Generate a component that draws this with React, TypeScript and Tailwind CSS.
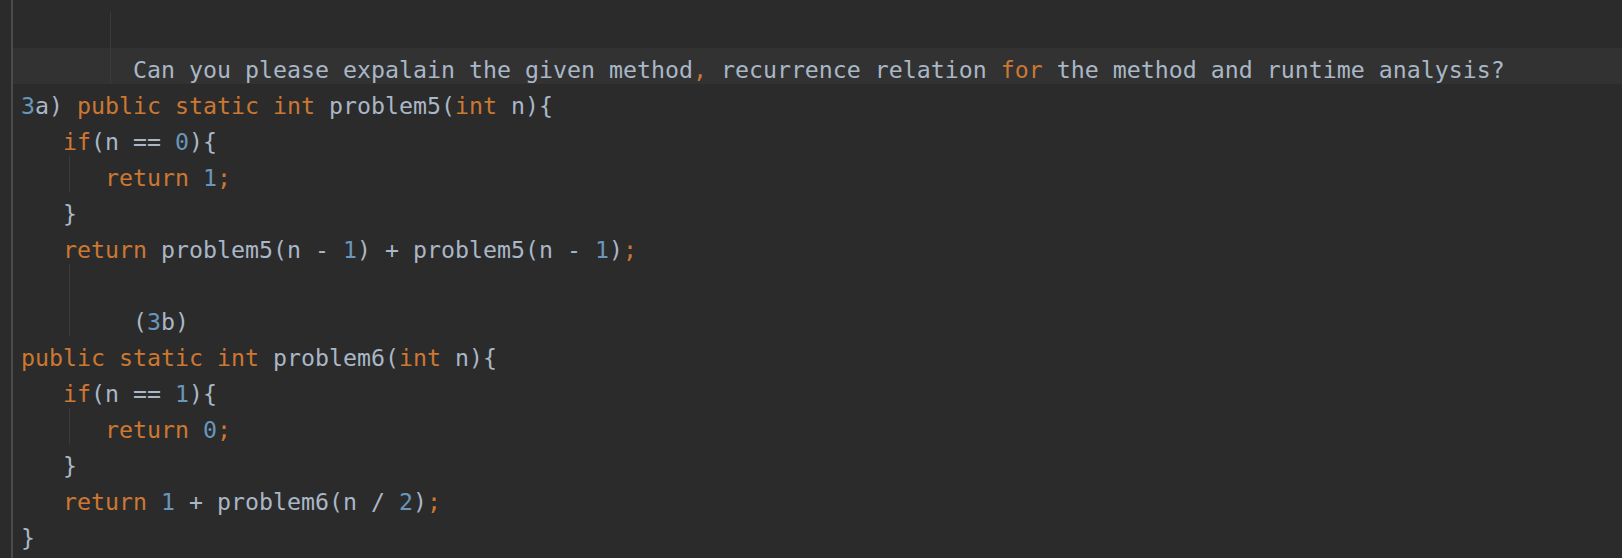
type Tok = [string, "t" | "k" | "n"];

const color = {
  t: "text-[#a9b7c6]",
  k: "text-[#cc7832]",
  n: "text-[#6897bb]",
};

interface Line {
  toks: Tok[];
  current?: boolean;
  guides?: number[];
}

const lines: Line[] = [
  { toks: [], guides: [110] },
  {
    current: true,
    guides: [110],
    toks: [
      ["        Can you please expalain the given method", "t"],
      [",", "k"],
      [" recurrence relation ", "t"],
      ["for", "k"],
      [" the method and runtime analysis?", "t"],
    ],
  },
  {
    toks: [
      ["3", "n"],
      ["a) ", "t"],
      ["public static int ", "k"],
      ["problem5(", "t"],
      ["int ", "k"],
      ["n){", "t"],
    ],
  },
  { toks: [["   ", "t"], ["if", "k"], ["(n == ", "t"], ["0", "n"], ["){", "t"]] },
  { guides: [69], toks: [["      ", "t"], ["return ", "k"], ["1", "n"], [";", "k"]] },
  { toks: [["   }", "t"]] },
  {
    toks: [
      ["   ", "t"],
      ["return ", "k"],
      ["problem5(n - ", "t"],
      ["1", "n"],
      [") + problem5(n - ", "t"],
      ["1", "n"],
      [")", "t"],
      [";", "k"],
    ],
  },
  { guides: [69], toks: [] },
  { guides: [69], toks: [["        (", "t"], ["3", "n"], ["b)", "t"]] },
  {
    toks: [
      ["public static int ", "k"],
      ["problem6(", "t"],
      ["int ", "k"],
      ["n){", "t"],
    ],
  },
  { toks: [["   ", "t"], ["if", "k"], ["(n == ", "t"], ["1", "n"], ["){", "t"]] },
  { guides: [69], toks: [["      ", "t"], ["return ", "k"], ["0", "n"], [";", "k"]] },
  { toks: [["   }", "t"]] },
  {
    toks: [
      ["   ", "t"],
      ["return ", "k"],
      ["1", "n"],
      [" + problem6(n / ", "t"],
      ["2", "n"],
      [")", "t"],
      [";", "k"],
    ],
  },
  { toks: [["}", "t"]] },
];

const CodeLine = ({ line }: { line: Line }) => {
  return (
    <div
      className={`relative h-[36px] leading-[36px] pl-[8px] whitespace-pre ${
        line.current ? "bg-[#323232]" : ""
      }`}
    >
      {line.guides?.map((x) => (
        <span
          key={x}
          className="absolute top-0 bottom-0 w-px bg-[#3b3b3b]"
          style={{ left: x - 13 }}
        />
      ))}
      <span className="relative top-[4px]">
        {line.toks.map(([text, kind], i) => (
          <span key={i} className={color[kind]}>
            {text}
          </span>
        ))}
      </span>
    </div>
  );
};

export default function App() {
  return (
    <div className="flex w-full h-[558px] bg-[#2b2b2b] overflow-hidden font-['DejaVu_Sans_Mono',monospace] text-[23.25px]">
      <div className="w-[11px] shrink-0 bg-[#2b2b2b]" />
      <div className="w-[2px] shrink-0 bg-[#4b4b4b]" />
      <div className="flex-1 flex flex-col pt-[12px]">
        {lines.map((line, i) => (
          <CodeLine key={i} line={line} />
        ))}
      </div>
    </div>
  );
}
